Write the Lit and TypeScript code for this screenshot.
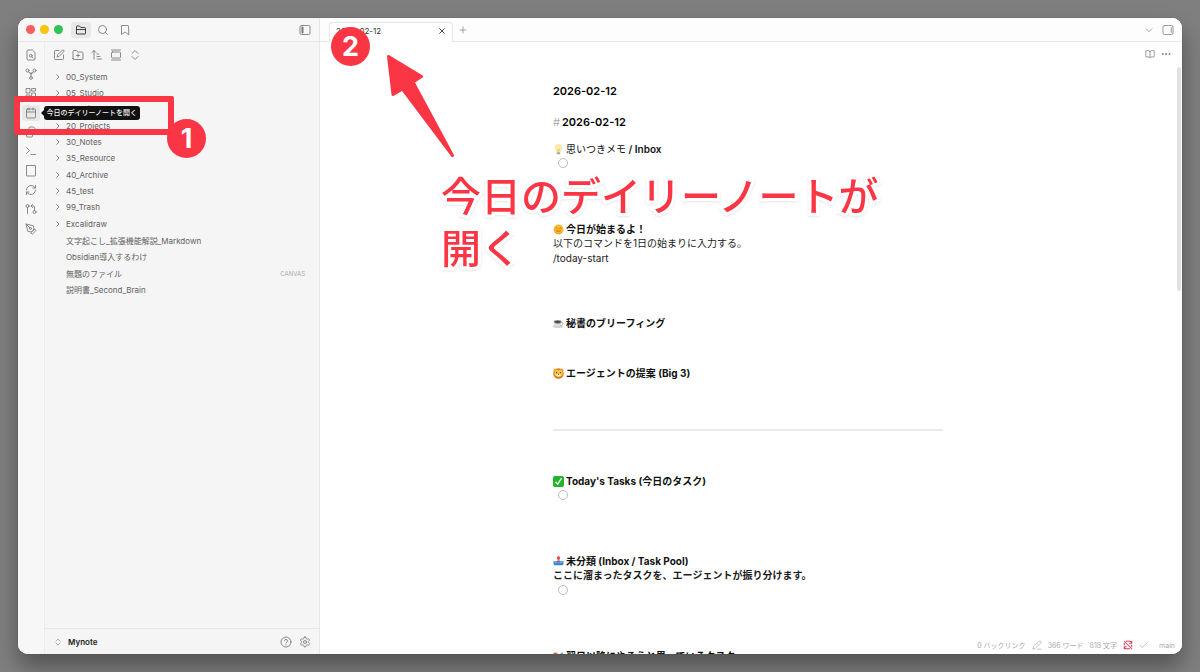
import { LitElement, html, css, svg, nothing } from "lit";
import { customElement } from "lit/decorators.js";

const icon = (body: unknown, cls = "i12") => html`<svg class="icon ${cls}" viewBox="0 0 24 24" aria-hidden="true">${body}</svg>`;

const I = {
  folder: svg`<path d="M3 19V5a1 1 0 0 1 1-1h5l2.500 3H19a2 2 0 0 1 2 2v10a1 1 0 0 1-1 1H4a1 1 0 0 1-1-1zM3 11h18"/>`,
  search: svg`<circle cx="11" cy="11" r="8"/><path d="m21 21-4.300-4.300"/>`,
  bookmark: svg`<path d="m19 21-7-5-7 5V4a1 1 0 0 1 1-1h12a1 1 0 0 1 1 1z"/>`,
  panelLeft: svg`<rect x="2" y="3" width="20" height="18" rx="3"/><path d="M7 7v10" stroke-width="4"/>`,
  panelRight: svg`<rect x="2" y="3" width="20" height="18" rx="3"/><path d="M18.500 7v10"/>`,
  fileSearch: svg`<path d="M14 2H6a2 2 0 0 0-2 2v16a2 2 0 0 0 2 2h12a2 2 0 0 0 2-2V8z"/><circle cx="11.500" cy="13.500" r="2.800"/><path d="m13.500 15.500 2.500 2.500"/>`,
  graph: svg`<circle cx="5" cy="5" r="3"/><circle cx="19" cy="5" r="3"/><circle cx="12" cy="20" r="2.800"/><circle cx="12" cy="11" r="1.500"/><path d="M6.500 7.500 11 10.500M17.500 7.500 13 10.500M12 12.500v5"/>`,
  dashboard: svg`<rect x="3" y="3" width="7" height="9"/><rect x="14" y="3" width="7" height="5"/><rect x="14" y="12" width="7" height="9"/><rect x="3" y="16" width="7" height="5"/>`,
  calendar: svg`<rect x="3" y="4" width="18" height="18" rx="2"/><path d="M8 2v4M16 2v4M3 10h18"/>`,
  files: svg`<path d="M8 7V4a2 2 0 0 1 2-2h7l4 4v9a2 2 0 0 1-2 2h-3"/><path d="M4 7h8l3 3v10a2 2 0 0 1-2 2H4a1 1 0 0 1-1-1V8a1 1 0 0 1 1-1z"/>`,
  terminal: svg`<path d="m3 17 6-6-6-6M12 19h9"/>`,
  page: svg`<rect x="3" y="1" width="18" height="21" rx="1"/>`,
  sync: svg`<path d="M3 12a9 9 0 0 1 9-9 9.750 9.750 0 0 1 6.700 2.700L21 8M21 3v5h-5M21 12a9 9 0 0 1-9 9 9.750 9.750 0 0 1-6.700-2.700L3 16M8 16H3v5"/>`,
  pull: svg`<circle cx="5" cy="6" r="3"/><path d="M5 9v12"/><circle cx="19" cy="18" r="3"/><path d="m15 9-3-3 3-3M12 6h5a2 2 0 0 1 2 2v7"/>`,
  pen: svg`<path d="m12 19 7-7 3 3-7 7zM18 13l-1.500-7.500L2 2l3.500 14.500L13 18l5-5zM2 2l7.600 7.600"/><circle cx="11" cy="11" r="2"/>`,
  edit: svg`<path d="M12 3H5a2 2 0 0 0-2 2v14a2 2 0 0 0 2 2h14a2 2 0 0 0 2-2v-7M18.400 2.600a2 2 0 0 1 3 3L12 15l-4 1 1-4z"/>`,
  folderPlus: svg`<path d="M2 19V5a2 2 0 0 1 2-2h5l2.500 3H20a2 2 0 0 1 2 2v11a2 2 0 0 1-2 2H4a2 2 0 0 1-2-2zM12 10v6M9 13h6"/>`,
  sort: svg`<path d="m2 7 4-4 4 4M6 3v17M12 10h3M12 15h6M12 20h9"/>`,
  gallery: svg`<path d="M3 2h18M3 22h18"/><rect x="3" y="6" width="18" height="12" rx="2"/>`,
  updown: svg`<path d="m6 15 6 6 6-6M6 9l6-6 6 6"/>`,
  right: svg`<path d="m8 5 7 7-7 7"/>`,
  down: svg`<path d="m5 9 7 7 7-7"/>`,
  close: svg`<path d="M5 5l14 14M19 5 5 19" stroke-width="2.500"/>`,
  plus: svg`<path d="M3 12h18M12 3v18"/>`,
  book: svg`<path d="M12 6v15M12 6a4 4 0 0 0-3-2H2v15h7a4 4 0 0 1 3 2 4 4 0 0 1 3-2h7V4h-7a4 4 0 0 0-3 2z"/>`,
  more: svg`<g fill="currentColor"><circle cx="4" cy="12" r="1.300"/><circle cx="12" cy="12" r="1.300"/><circle cx="20" cy="12" r="1.300"/></g>`,
  help: svg`<circle cx="12" cy="12" r="10"/><path d="M9 9a3 3 0 0 1 5.900 1c0 2-2.900 2.500-2.900 4M12 17.500v.5"/>`,
  gear: svg`<path d="M12.200 2h-.4a2 2 0 0 0-2 2v.2a2 2 0 0 1-1 1.700l-.4.300a2 2 0 0 1-2 0l-.2-.1a2 2 0 0 0-2.700.7l-.2.400a2 2 0 0 0 .7 2.700l.2.100a2 2 0 0 1 1 1.700v.500a2 2 0 0 1-1 1.800l-.2.100a2 2 0 0 0-.7 2.700l.2.400a2 2 0 0 0 2.700.7l.2-.1a2 2 0 0 1 2 0l.4.300a2 2 0 0 1 1 1.700v.2a2 2 0 0 0 2 2h.4a2 2 0 0 0 2-2v-.2a2 2 0 0 1 1-1.700l.4-.3a2 2 0 0 1 2 0l.2.100a2 2 0 0 0 2.700-.7l.2-.4a2 2 0 0 0-.7-2.700l-.2-.1a2 2 0 0 1-1-1.800v-.5a2 2 0 0 1 1-1.700l.2-.1a2 2 0 0 0 .7-2.700l-.2-.4a2 2 0 0 0-2.700-.7l-.2.100a2 2 0 0 1-2 0l-.4-.3a2 2 0 0 1-1-1.700V4a2 2 0 0 0-2-2z"/><circle cx="12" cy="12" r="3"/>`,
  pencil: svg`<path d="M17 3a2.800 2.800 0 0 1 4 4L7.500 20.500 2 22l1.500-5.500zM13 22h9"/>`,
  noSync: svg`<path d="M3 3l18 18M3 12V7M8 3h8a5 5 0 0 1 5 5M21 3v5h-5M21 12v4M16 21H8a5 5 0 0 1-5-5M3 21v-5h5" stroke-width="2.500"/>`,
  check: svg`<path d="m3 13 5 5L21 5"/>`,
};

const emoji = (label: string, body: unknown) => html`<svg class="emoji" viewBox="0 0 20 20" role="img" aria-label=${label}>${body}</svg>`;
const E = {
  bulb: emoji("電球", svg`<path d="M10 1a6 6 0 0 0-6 6c0 3 3 4 3 8h6c0-4 3-5 3-8a6 6 0 0 0-6-6z" fill="#fdeeb0" stroke="#ecd68e"/><path d="M8 8l2 2 2-2v5H8z" fill="#f4c65b"/><path d="M7 15h6v2l-2 2H9l-2-2z" fill="#a3a8ac"/>`),
  face: emoji("にっこり", svg`<circle cx="10" cy="10" r="9" fill="#fbb62c"/><path d="M3 14a9 8 0 0 0 14 0c-2 5-12 5-14 0z" fill="#ee8420"/><path d="M5 8q1.500-2 3 0M12 8q1.500-2 3 0M6 12q4 3 8 0" fill="none" stroke="#8a4e20" stroke-width="1.200"/>`),
  coffee: emoji("コーヒー", svg`<ellipse cx="9" cy="15" rx="9" ry="3" fill="#c9ced1"/><path d="M2 7h13c0 6-2 9-6.500 9S2 13 2 7z" fill="#d9dddf"/><path d="M15 8c5-1 4 5-1 5" fill="none" stroke="#9ba2a6" stroke-width="1.500"/><ellipse cx="8.500" cy="7" rx="6.500" ry="2.800" fill="#51423b" stroke="#a2a7aa"/>`),
  lion: emoji("ライオン", svg`<circle cx="10" cy="10" r="9.500" fill="#d6781d"/><circle cx="4" cy="4" r="3" fill="#efa23c"/><circle cx="16" cy="4" r="3" fill="#efa23c"/><ellipse cx="10" cy="9.500" rx="7.500" ry="6.500" fill="#ffc741"/><circle cx="6.500" cy="8.500" r="1.200" fill="#513117"/><circle cx="13.500" cy="8.500" r="1.200" fill="#513117"/><ellipse cx="10" cy="13" rx="3.500" ry="2.500" fill="#fff0c5"/><path d="M9 11h2l-1 1z" fill="#60331c" stroke="#60331c"/>`),
  check: emoji("完了", svg`<rect x="0" y="0" width="20" height="20" rx="3" fill="#20b52d"/><path d="m4.500 11 4 4L15.500 4" fill="none" stroke="#fff" stroke-width="2.500"/>`),
  tray: emoji("受信トレイ", svg`<path d="M1 9h18v5a3 3 0 0 1-3 3H4a3 3 0 0 1-3-3z" fill="#3b83cc"/><path d="M1 9h5l2 3h4l2-3h5l-2 4H3z" fill="#68a9e4"/><path d="M10 1v7" stroke="#dc4a4a" stroke-width="3"/><circle cx="10" cy="3.500" r="3" fill="#e84e4e"/><path d="M7 8h6l-3 3z" fill="#dc4a4a"/>`),
  calendar: emoji("予定", svg`<path d="M1 3h7v8H1z" fill="#e65a4c"/><path d="M13 5l5-3v17H2V9z" fill="#51a9c7"/><path d="M4 11h10v6H4z" fill="#d8edf2"/>`),
};

const ribbon: [string, unknown][] = [
  ["検索", I.fileSearch], ["グラフビューを開く", I.graph], ["キャンバスを作成", I.dashboard], ["今日のデイリーノートを開く", I.calendar],
  ["テンプレートを挿入", I.files], ["ターミナル", I.terminal], ["ページ", I.page], ["同期", I.sync], ["プル", I.pull], ["Excalidraw", I.pen],
];
const tools: [string, unknown][] = [["新規ノート", I.edit], ["新規フォルダ", I.folderPlus], ["並べ替え", I.sort], ["自動表示", I.gallery], ["すべて展開", I.updown]];
const folders = ["00_System", "05_Studio", "10_Daily", "20_Projects", "30_Notes", "35_Resource", "40_Archive", "45_test", "99_Trash", "Excalidraw"];
const files: [string, string?][] = [["文字起こし_拡張機能解説_Markdown"], ["Obsidian導入するわけ"], ["無題のファイル", "CANVAS"], ["説明書_Second_Brain"]];

const shared = css`
  :host { box-sizing: border-box; }
  * { box-sizing: border-box; margin: 0; padding: 0; }
  button { font: inherit; color: inherit; background: none; border: 0; display: flex; align-items: center; justify-content: center; }
  .icon { display: block; fill: none; stroke: currentColor; stroke-width: 1.7; stroke-linecap: round; stroke-linejoin: round; flex: none; }
  .i8 { width: 8px; height: 8px; stroke-width: 2.2; }
  .i10 { width: 10px; height: 10px; }
  .i12 { width: 12px; height: 12px; }
`;

@customElement("vault-sidebar")
class VaultSidebar extends LitElement {
  static styles = [shared, css`
    :host { display: flex; flex-direction: column; flex: none; width: 302px; background: #f5f5f5; border-right: 1px solid #e6e6e6; }
    .top { height: 24px; flex: none; display: flex; align-items: center; padding: 0 8px; border-bottom: 1px solid #e8e8e8; background: #f7f7f7; color: #777; }
    .lights { display: flex; gap: 5px; margin-right: 8px; }
    .light { width: 9px; height: 9px; border-radius: 50%; }
    .red { background: #fb5c60; }
    .yellow { background: #f8c40c; }
    .green { background: #32c458; }
    .tab { width: 20px; height: 16px; border-radius: 3px; margin-right: 2px; }
    .active { background: #e8e8e8; color: #222; }
    .toggle { margin-left: auto; }
    .body { flex: 1; min-height: 0; display: flex; }
    .ribbon { width: 27px; flex: none; display: flex; flex-direction: column; align-items: center; gap: 3px; padding: 5px 1px 0 0; border-right: 1px solid #ececec; color: #777; background: #f7f7f7; }
    .ribbon button { width: 18px; height: 16px; border-radius: 3px; position: relative; }
    .ribbon button:nth-child(3n) { margin-bottom: 1px; }
    .ribbon .current { background: #e8e8e8; }
    .tip { position: absolute; left: 22px; top: 1px; width: max-content; height: 14px; line-height: 14px; padding: 0 3px; border-radius: 3px; background: #111; color: #f2f2f2; font-size: 7px; font-weight: 500; z-index: 1; }
    .tip::before { content: ""; position: absolute; left: -3px; top: 4px; border: 3px solid transparent; border-right-color: #111; border-left: 0; }
    .explorer { flex: 1; display: flex; flex-direction: column; min-width: 0; }
    .tools { display: flex; gap: 7px; padding: 7px 8px; color: #777; }
    .tree { flex: 1; list-style: none; padding: 1px 14px 0 9px; overflow: hidden; color: #626262; font-size: 8px; }
    .row { display: flex; align-items: center; height: 16px; gap: 4px; }
    .row:nth-child(3n) { margin-bottom: 1px; }
    .row button { gap: 4px; }
    .file { padding-left: 12px; justify-content: space-between; }
    .row a { color: inherit; text-decoration: none; }
    .tag { font-size: 6px; color: #aaa; }
    .vault { height: 26px; flex: none; display: flex; align-items: center; gap: 7px; padding: 0 8px 0 9px; border-top: 1px solid #e8e8e8; color: #777; }
    .name { gap: 6px; margin-right: auto; font-size: 8px; font-weight: 600; color: #222; }
    .name svg { color: #999; }
  `];

  render() {
    return html`
      <header class="top">
        <div class="lights"><span class="light red"></span><span class="light yellow"></span><span class="light green"></span></div>
        <button class="tab active" aria-label="ファイル">${icon(I.folder)}</button>
        <button class="tab" aria-label="検索">${icon(I.search)}</button>
        <button class="tab" aria-label="ブックマーク">${icon(I.bookmark)}</button>
        <button class="toggle" aria-label="サイドバー">${icon(I.panelLeft)}</button>
      </header>
      <div class="body">
        <nav class="ribbon">
          ${ribbon.map(([label, g], n) => html`<button class=${n === 3 ? "current" : ""} aria-label=${label}>${icon(g)}${n === 3 ? html`<span class="tip">${label}</span>` : nothing}</button>`)}
        </nav>
        <section class="explorer">
          <div class="tools">
            ${tools.map(([label, g]) => html`<button aria-label=${label}>${icon(g)}</button>`)}
          </div>
          <ul class="tree">
            ${folders.map((f) => html`<li class="row"><button>${icon(I.right, "i8")}<span>${f}</span></button></li>`)}
            ${files.map(([f, t]) => html`<li class="row file"><a href="#">${f}</a>${t ? html`<span class="tag">${t}</span>` : nothing}</li>`)}
          </ul>
          <footer class="vault">
            <button class="name">${icon(I.updown, "i8")}Mynote</button>
            <button aria-label="ヘルプ">${icon(I.help)}</button>
            <button aria-label="設定">${icon(I.gear)}</button>
          </footer>
        </section>
      </div>`;
  }
}

@customElement("note-pane")
class NotePane extends LitElement {
  static styles = [shared, css`
    :host { display: flex; flex-direction: column; flex: 1; min-width: 0; background: #fff; position: relative; }
    .tabs { height: 24px; flex: none; display: flex; align-items: stretch; padding: 4px 8px 0 9px; background: linear-gradient(#e8e8e8, #e8e8e8) bottom / 100% 1px no-repeat #fdfdfd; color: #888; }
    .tab { width: 124px; display: flex; align-items: center; justify-content: space-between; padding: 0 6px 3px; background: #fff; border: 1px solid #e6e6e6; border-bottom: 0; border-radius: 4px 4px 0 0; font-size: 8px; color: #333; }
    .tab button { color: #222; }
    .add { margin-left: 6px; margin-bottom: 4px; }
    .list { margin-left: auto; margin-right: 8px; margin-bottom: 4px; }
    .side { margin-bottom: 4px; }
    .actions { height: 24px; flex: none; display: flex; justify-content: flex-end; align-items: center; gap: 6px; padding: 0 11px; color: #777; }
    .scroll { flex: 1; min-height: 0; overflow: hidden; display: flex; justify-content: center; padding: 17px 6px 0 0; }
    .bar { position: absolute; right: 1px; top: 49px; width: 4px; height: 224px; border-radius: 2px; background: #e2e2e2; }
    article { width: 390px; flex: none; color: #1c1c1c; font-size: 10px; }
    .title, .h1 { font-size: 11px; line-height: 16px; font-weight: 600; color: #000; }
    .h1 { margin-top: 15px; margin-bottom: 12px; }
    .hash { color: #aaa; font-weight: 400; margin-right: 2px; }
    .h { display: flex; align-items: center; gap: 2px; font-size: 10px; line-height: 14px; font-weight: 700; color: #111; }
    .lt { font-weight: 400; }
    .lt b { font-weight: 600; }
    .emoji { width: 11px; height: 11px; flex: none; }
    p { line-height: 15px; }
    .strong { font-weight: 700; }
    .task { height: 14px; display: flex; align-items: center; padding-left: 5px; }
    .task input { appearance: none; width: 10px; height: 10px; border: 1px solid #bbb; border-radius: 50%; background: #fff; }
    .far { margin-top: 52px; }
    .mid { margin-top: 50px; }
    .near { margin-top: 36px; }
    hr { border: 0; height: 2px; background: #ebebeb; margin: 49px 0 43px; }
    .status { position: absolute; right: 0; bottom: 0; height: 18px; display: flex; align-items: center; gap: 6px; padding: 0 7px; background: #fff; color: #aaa; font-size: 7px; }
    .danger { color: #d8405a; }
    .branch { margin-left: 4px; }
  `];

  render() {
    return html`
      <header class="tabs">
        <div class="tab"><span>2026-02-12</span><button aria-label="閉じる">${icon(I.close, "i8")}</button></div>
        <button class="add" aria-label="新しいタブ">${icon(I.plus, "i8")}</button>
        <button class="list" aria-label="タブ一覧">${icon(I.down, "i10")}</button>
        <button class="side" aria-label="右サイドバー">${icon(I.panelRight)}</button>
      </header>
      <div class="actions">
        <button aria-label="閲覧ビュー">${icon(I.book, "i10")}</button>
        <button aria-label="その他">${icon(I.more, "i10")}</button>
      </div>
      <div class="scroll">
        <article>
          <div class="title">2026-02-12</div>
          <h1 class="h1"><span class="hash">#</span>2026-02-12</h1>
          <h2 class="h lt">${E.bulb}<span>思いつきメモ<b> / Inbox</b></span></h2>
          <div class="task"><input type="checkbox" aria-label="メモのタスク" /></div>
          <h2 class="h far">${E.face}今日が始まるよ！</h2>
          <p>以下のコマンドを1日の始まりに入力する。</p>
          <p>/today-start</p>
          <h2 class="h mid">${E.coffee}秘書のブリーフィング</h2>
          <h2 class="h near">${E.lion}エージェントの提案 (Big 3)</h2>
          <hr />
          <h2 class="h">${E.check}Today's Tasks (今日のタスク)</h2>
          <div class="task"><input type="checkbox" aria-label="今日のタスク" /></div>
          <h2 class="h far">${E.tray}未分類 (Inbox / Task Pool)</h2>
          <p class="strong">ここに溜まったタスクを、エージェントが振り分けます。</p>
          <div class="task"><input type="checkbox" aria-label="未分類のタスク" /></div>
          <h2 class="h far">${E.calendar}翌日以降にやろうと思っているタスク</h2>
        </article>
      </div>
      <div class="bar"></div>
      <footer class="status">
        <span>0 バックリンク</span>${icon(I.pencil, "i10")}<span>366 ワード</span><span>818 文字</span>
        ${icon(I.noSync, "i10 danger")}${icon(I.check, "i10")}<span class="branch">main</span>
      </footer>`;
  }
}

@customElement("app-root")
class AppRoot extends LitElement {
  static styles = [shared, css`
    :host { display: flex; height: 100vh; padding: 18px; position: relative; overflow: hidden; background: #7f7f7f; font-family: Inter, "Noto Sans CJK JP", sans-serif; }
    .window { flex: 1; min-width: 0; display: flex; overflow: hidden; border-radius: 10px; background: #fff; box-shadow: 0 0 1px #444, 0 12px 22px rgba(0, 0, 0, 0.36); }
    .frame { position: absolute; left: 14px; top: 96px; width: 160px; height: 39px; border: 6px solid #fb3644; border-radius: 2px; }
    .num { position: absolute; width: 39px; height: 39px; border-radius: 50%; background: #fb3644; color: #fff; font-size: 27px; line-height: 39px; font-weight: 700; text-align: center; }
    .one { left: 167px; top: 119px; }
    .two { left: 331px; top: 27px; }
    .arrow { position: absolute; left: 380px; top: 48px; width: 80px; height: 116px; }
    .call { position: absolute; left: 441px; top: 171px; font-size: 40px; line-height: 52px; font-weight: 500; color: #fb3644; white-space: nowrap; -webkit-text-stroke: 6px #fff; paint-order: stroke fill; filter: drop-shadow(0 1px 1px rgba(0, 0, 0, 0.1)); }
  `];

  render() {
    return html`
      <main class="window"><vault-sidebar></vault-sidebar><note-pane></note-pane></main>
      <div class="frame"></div>
      <div class="num one">1</div>
      <div class="num two">2</div>
      <svg class="arrow" viewBox="380 48 80 116" aria-hidden="true"><path d="M388.500 56.500 421.500 76.500 413 82 452.500 155.500 402.500 89 393 94.500z" fill="#fb3644" stroke="#fb3644" stroke-width="3" stroke-linejoin="round"/></svg>
      <div class="call">今日のデイリーノートが<br />開く</div>`;
  }
}
